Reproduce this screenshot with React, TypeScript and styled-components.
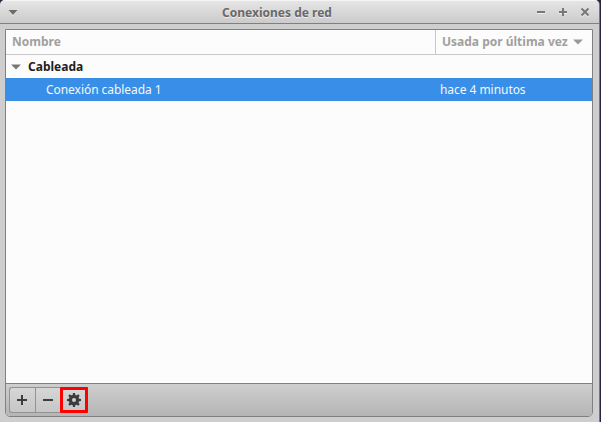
import React from "react";
import styled, { createGlobalStyle } from "styled-components";

const GlobalStyle = createGlobalStyle`
  * { box-sizing: border-box; }
  body { margin: 0; background: #2c2340; overflow: hidden; }
`;

const Window = styled.main`
  width: 600px;
  height: 422px;
  display: flex;
  flex-direction: column;
  background: #cecece;
  border-right: 1px solid #77757c;
  border-radius: 5px 5px 0 0;
  overflow: hidden;
  font: 12px/16px "Noto Sans", sans-serif;
  cursor: default;
`;

const TitleBar = styled.header`
  height: 24px;
  flex: none;
  display: grid;
  grid-template-columns: 72px 1fr 72px;
  align-items: center;
  border-top: 1px solid #f5f5f5;
  border-bottom: 1px solid #808080;
  background: linear-gradient(#e5e5e5, #cbcbcb);
`;

const Title = styled.h1`
  margin: 0;
  padding: 2px 45px 0 0;
  text-align: center;
  font-size: 12px;
  line-height: 20px;
  font-weight: 700;
  color: #696969;
  text-shadow: 0 1px #eeeeee;
  white-space: nowrap;
`;

const WindowMenu = styled.svg`
  display: block;
  margin-left: 8px;
`;

const Controls = styled.div`
  display: flex;
  gap: 12px;
  justify-content: flex-end;
  padding-right: 9px;
`;

const Glyph = styled.svg`
  display: block;
  flex: none;
`;

const Panel = styled.section`
  width: 588px;
  height: 388px;
  margin: 5px 0 0 5px;
  display: flex;
  flex-direction: column;
  border: 1px solid #808080;
  border-radius: 0 0 5px 5px;
  overflow: hidden;
  background: #fcfcfc;
`;

const Columns = styled.div`
  display: grid;
  grid-template-columns: 429px 1fr;
  height: 25px;
  border-bottom: 1px solid #c9c9c9;
`;

const HeaderCell = styled.div<{ $divided?: boolean }>`
  display: flex;
  align-items: center;
  gap: 5px;
  padding-left: 6px;
  border-left: ${(p) => (p.$divided ? "1px solid #c9c9c9" : "0")};
  font-weight: 700;
  color: #a0a0a0;
  white-space: nowrap;
`;

const GroupRow = styled.div`
  display: flex;
  align-items: center;
  gap: 7px;
  height: 23px;
  padding-left: 5px;
  font-weight: 700;
  color: #222222;
`;

const ConnectionRow = styled.div`
  display: grid;
  grid-template-columns: 394px 1fr;
  align-items: center;
  height: 23px;
  padding-left: 40px;
  background: #398ee7;
  color: #f4f8fc;
  letter-spacing: -0.05px;
`;

const Toolbar = styled.footer`
  display: flex;
  height: 33px;
  margin-top: auto;
  padding: 3px;
  border-top: 1px solid #808080;
  background: linear-gradient(#cecece, #b5b5b5);
`;

const ButtonGroup = styled.div`
  display: flex;
  height: 26px;
  border: 1px solid #929292;
  border-right: 0;
  border-radius: 3px 0 0 3px;
  background: linear-gradient(#d6d6d6, #c6c6c6);
`;

const ToolButton = styled.button<{ $highlighted?: boolean }>`
  width: ${(p) => (p.$highlighted ? 28 : 26)}px;
  height: ${(p) => (p.$highlighted ? 26 : 24)}px;
  margin: ${(p) => (p.$highlighted ? "-1px 0 0 -2px" : "0")};
  padding: 0 ${(p) => (p.$highlighted ? 0 : 1)}px 0 0;
  display: flex;
  align-items: center;
  justify-content: center;
  border: ${(p) => (p.$highlighted ? "3px solid #ff0000" : "0")};
  border-right: ${(p) => (p.$highlighted ? "3px solid #ff0000" : "1px solid #929292")};
  border-radius: ${(p) => (p.$highlighted ? 1 : 0)}px;
  background: ${(p) => (p.$highlighted ? "linear-gradient(#d5d5d5, #c7c7c7)" : "transparent")};
`;

const teeth = [0, 45, 90, 135, 180, 225, 270, 315];

export default function App() {
  return (
    <>
      <GlobalStyle />
      <Window>
        <TitleBar>
          <WindowMenu width="10" height="8" viewBox="0 0 10 8">
            <path d="M1 3h8L5 8z" fill="#f2f2f2" />
            <path d="M.5 2h9L5 7z" fill="#6c6c6c" />
          </WindowMenu>
          <Title>Conexiones de red</Title>
          <Controls>
            <Glyph width="10" height="10" viewBox="0 0 10 10">
              <path d="M1 6h8v1H1z" fill="#eeeeee" />
              <path d="M1 4h8v2H1z" fill="#777777" />
            </Glyph>
            <Glyph width="10" height="10" viewBox="0 0 10 10">
              <path d="M1 6h8v1H1z" fill="#eeeeee" />
              <path d="M1 4h3V1h2v3h3v2H6v3H4V6H1z" fill="#777777" />
            </Glyph>
            <Glyph width="10" height="10" viewBox="0 0 10 10">
              <path d="m1.5 2.5 7 7m0-7-7 7" stroke="#eeeeee" strokeWidth="2" />
              <path d="m1.5 1.5 7 7m0-7-7 7" stroke="#777777" strokeWidth="2" />
            </Glyph>
          </Controls>
        </TitleBar>
        <Panel>
          <Columns>
            <HeaderCell>Nombre</HeaderCell>
            <HeaderCell $divided>
              Usada por última vez
              <Glyph width="10" height="6" viewBox="0 0 10 6">
                <path d="M0 .5h10l-5 5z" fill="#999999" />
              </Glyph>
            </HeaderCell>
          </Columns>
          <GroupRow>
            <Glyph width="10" height="6" viewBox="0 0 10 6">
              <path d="M0 .5h10l-5 5z" fill="#777777" />
            </Glyph>
            Cableada
          </GroupRow>
          <ConnectionRow>
            <span>Conexión cableada 1</span>
            <span>hace 4 minutos</span>
          </ConnectionRow>
          <Toolbar>
            <ButtonGroup>
              <ToolButton aria-label="Añadir">
                <Glyph width="10" height="10" viewBox="0 0 10 10">
                  <path d="M0 4h4V0h2v4h4v2H6v4H4V6H0z" fill="#3c3c3c" />
                </Glyph>
              </ToolButton>
              <ToolButton aria-label="Quitar">
                <Glyph width="10" height="10" viewBox="0 0 10 10">
                  <path d="M0 4h10v2H0z" fill="#3c3c3c" />
                </Glyph>
              </ToolButton>
              <ToolButton $highlighted aria-label="Configurar">
                <Glyph width="14" height="14" viewBox="-7 -7 14 14">
                  {teeth.map((angle) => (
                    <path
                      key={angle}
                      d="M-1.5-4-1-7h2l.5 3z"
                      transform={`rotate(${angle})`}
                      fill="#3c3c3c"
                    />
                  ))}
                  <circle r="3.6" fill="none" stroke="#3c3c3c" strokeWidth="3.2" />
                </Glyph>
              </ToolButton>
            </ButtonGroup>
          </Toolbar>
        </Panel>
      </Window>
    </>
  );
}
